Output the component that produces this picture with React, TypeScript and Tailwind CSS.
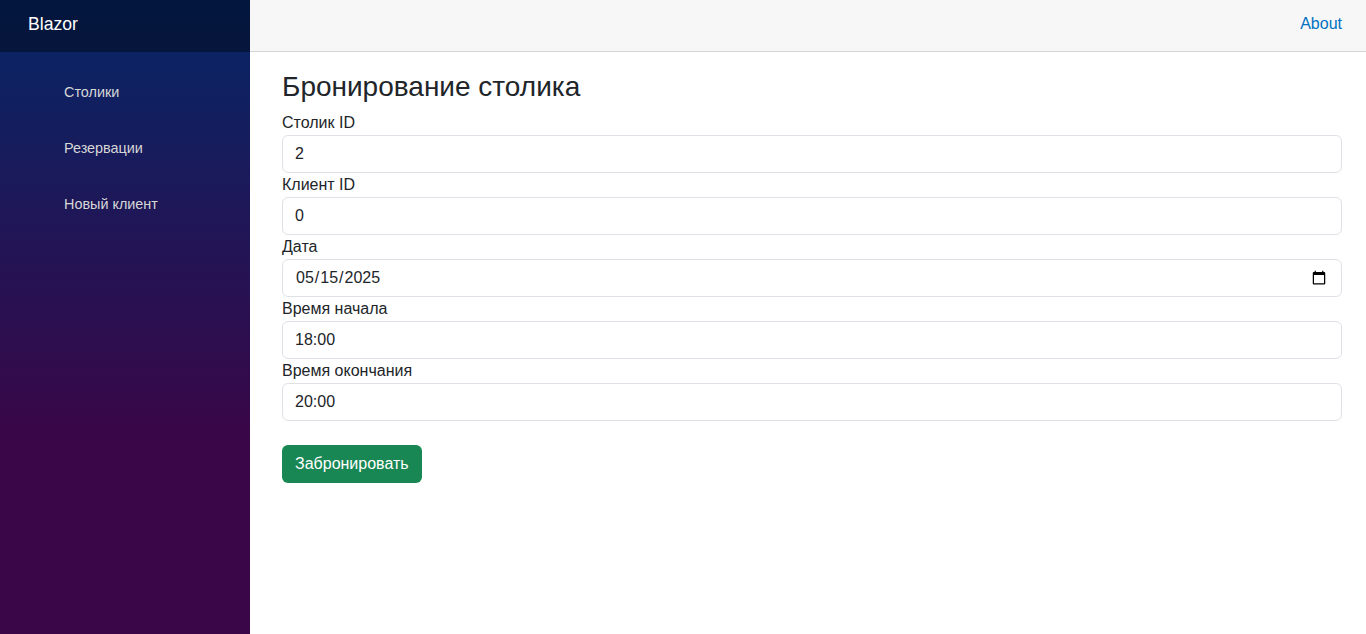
import React from "react";

const font = { fontFamily: '"Liberation Sans", Arial, sans-serif' };

function Field({ label, value, type = "text" }: { label: string; value: string; type?: string }) {
  return (
    <div className="flex flex-col">
      <label className="text-[16px] leading-[24px] text-[#212529]">{label}</label>
      <input
        type={type}
        defaultValue={value}
        className="h-[38px] w-full rounded-[6px] border border-[#dee2e6] bg-white px-[12px] text-[16px] leading-[24px] text-[#212529] outline-none"
        style={font}
      />
    </div>
  );
}

export default function App() {
  const navItems = ["Столики", "Резервации", "Новый клиент"];
  return (
    <div className="flex min-h-[634px] h-[634px] w-full bg-white" style={font}>
      <aside className="flex w-[250px] shrink-0 flex-col bg-[linear-gradient(180deg,#052767_0%,#3a0647_70%)]">
        <div className="flex h-[52px] items-center bg-[rgba(0,0,0,0.4)] pb-[4px] pl-[28px]">
          <span className="text-[17.6px] text-white">Blazor</span>
        </div>
        <nav className="flex flex-col px-4 pt-[17px]">
          {navItems.map((n) => (
            <div key={n} className="px-4 pb-2">
              <a className="flex h-[48px] items-center text-[14.4px] text-[#d7d7d7]">
                <span className="mr-[12px] inline-block w-[20px]" />
                {n}
              </a>
            </div>
          ))}
        </nav>
      </aside>
      <main className="flex flex-1 flex-col">
        <div className="flex h-[52px] items-center justify-end border-b border-[#d6d5d5] bg-[#f7f7f7] pb-[4px] pr-[24px]">
          <a className="text-[16px] text-[#0071c1]">About</a>
        </div>
        <article className="pl-[32px] pr-[24px] pt-[18px]">
          <h3 className="mb-[7px] text-[28px] leading-[34px] font-medium text-[#212529]">Бронирование столика</h3>
          <div className="flex flex-col">
            <Field label="Столик ID" value="2" />
            <Field label="Клиент ID" value="0" />
            <Field label="Дата" value="2025-05-15" type="date" />
            <Field label="Время начала" value="18:00" />
            <Field label="Время окончания" value="20:00" />
          </div>
          <button className="mt-[24px] h-[38px] rounded-[6px] bg-[#198754] px-[13px] text-[16px] text-white">
            Забронировать
          </button>
        </article>
      </main>
    </div>
  );
}
